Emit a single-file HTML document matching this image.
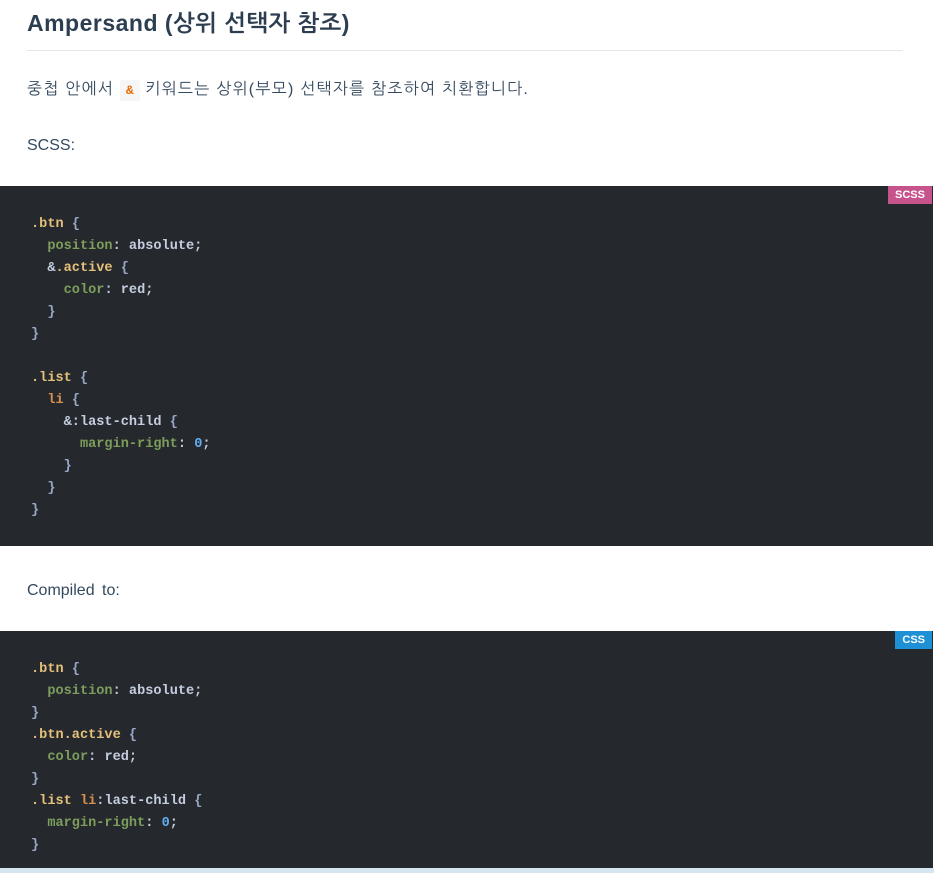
<!DOCTYPE html>
<html><head><meta charset="utf-8"><style>
body{margin:0;background:#fff;width:934px;height:873px;overflow:hidden;position:relative;font-family:"Liberation Sans","NanumGothic",sans-serif;color:#333}
h2{position:absolute;left:27px;top:6px;margin:0;font-size:23px;letter-spacing:0.5px;font-weight:bold;color:#2c3e50;line-height:34px}
.hr{position:absolute;left:27px;top:50px;width:876px;height:1px;background:#e6e6e6}
.p{position:absolute;left:27px;font-size:16px;line-height:22px;color:#34495e}
.ko{letter-spacing:1.25px}
code.i{background:#f6f6f6;color:#e96900;font-family:"Liberation Mono",monospace;font-weight:bold;padding:3px 6px;border-radius:2px;font-size:13px;letter-spacing:0}
pre{position:absolute;left:0;width:933px;margin:0;background:#25292d;padding:28px 0 24px 31px;box-sizing:border-box;font-family:"Liberation Mono",monospace;font-weight:bold;font-size:13.6px;line-height:22px;color:#c5cde0}
.tag{position:absolute;right:1px;top:0;color:#fff;font-family:"Liberation Sans",sans-serif;font-weight:bold;font-size:11px;padding:1px 7px;line-height:16px}
.s{color:#e5c07b}.k{color:#7d9d5c}.o{color:#d9904f}.n{color:#61afef}.b{color:#9aa7c7}
</style></head><body>
<h2>Ampersand (상위 선택자 참조)</h2>
<div class="hr"></div>
<div class="p ko" style="top:79px">중첩 안에서 <code class="i">&amp;</code> 키워드는 상위(부모) 선택자를 참조하여 치환합니다.</div>
<div class="p" style="top:135px">SCSS:</div>
<pre style="top:186px;height:360px"><span class="tag" style="background:#c6538c">SCSS</span><span class="s">.btn</span> <span class="b">{</span>
  <span class="k">position</span>: absolute;
  &amp;<span class="s">.active</span> <span class="b">{</span>
    <span class="k">color</span>: red;
  <span class="b">}</span>
<span class="b">}</span>

<span class="s">.list</span> <span class="b">{</span>
  <span class="o">li</span> <span class="b">{</span>
    &amp;:last-child <span class="b">{</span>
      <span class="k">margin-right</span>: <span class="n">0</span>;
    <span class="b">}</span>
  <span class="b">}</span>
<span class="b">}</span></pre>
<div class="p" style="top:580px;word-spacing:3px">Compiled to:</div>
<pre style="top:631px;height:237px"><span class="tag" style="background:#1e90d6">CSS</span><span class="s">.btn</span> <span class="b">{</span>
  <span class="k">position</span>: absolute;
<span class="b">}</span>
<span class="s">.btn.active</span> <span class="b">{</span>
  <span class="k">color</span>: red;
<span class="b">}</span>
<span class="s">.list</span> <span class="o">li</span>:last-child <span class="b">{</span>
  <span class="k">margin-right</span>: <span class="n">0</span>;
<span class="b">}</span></pre>
<div style="position:absolute;left:0;top:868px;width:934px;height:5px;background:#d6e6f0"></div>
</body></html>
